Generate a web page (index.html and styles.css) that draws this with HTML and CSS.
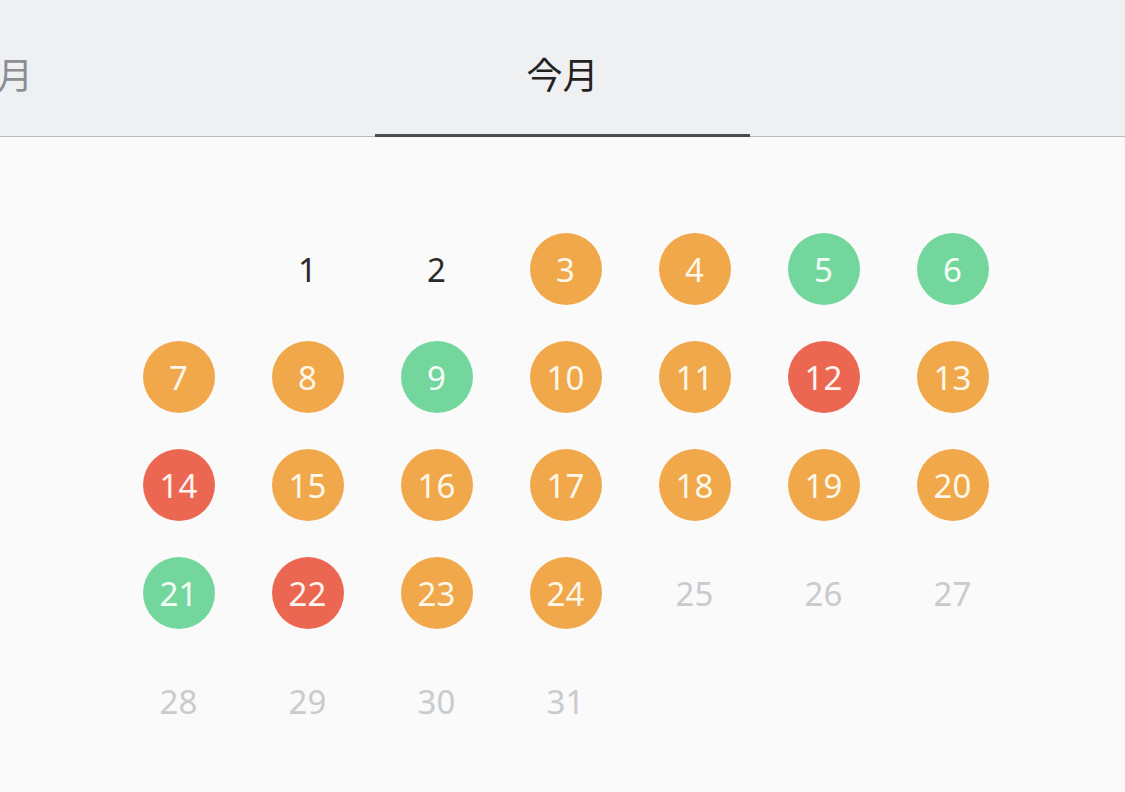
FILE: index.html
```html
<!DOCTYPE html>
<html lang="ja">
<head>
  <meta charset="UTF-8" />
  <title>カレンダー</title>
  <link rel="stylesheet" href="styles.css">
</head>
<body>

<div class="tabs">
  <div class="tab prev"><span class="tab-label">先月</span></div>
  <div class="tab active"><span class="tab-label">今月</span></div>
  <div class="tab"></div>
</div>

<div class="calendar">
  <div class="grid">
    <div class="day"></div>
    <div class="day"><span class="num">1</span></div>
    <div class="day"><span class="num">2</span></div>
    <div class="day"><span class="num orange">3</span></div>
    <div class="day"><span class="num orange">4</span></div>
    <div class="day"><span class="num green">5</span></div>
    <div class="day"><span class="num green">6</span></div>

    <div class="day"><span class="num orange">7</span></div>
    <div class="day"><span class="num orange">8</span></div>
    <div class="day"><span class="num green">9</span></div>
    <div class="day"><span class="num orange">10</span></div>
    <div class="day"><span class="num orange">11</span></div>
    <div class="day"><span class="num red">12</span></div>
    <div class="day"><span class="num orange">13</span></div>

    <div class="day"><span class="num red">14</span></div>
    <div class="day"><span class="num orange">15</span></div>
    <div class="day"><span class="num orange">16</span></div>
    <div class="day"><span class="num orange">17</span></div>
    <div class="day"><span class="num orange">18</span></div>
    <div class="day"><span class="num orange">19</span></div>
    <div class="day"><span class="num orange">20</span></div>

    <div class="day"><span class="num green">21</span></div>
    <div class="day"><span class="num red">22</span></div>
    <div class="day"><span class="num orange">23</span></div>
    <div class="day"><span class="num orange">24</span></div>
    <div class="day"><span class="num future">25</span></div>
    <div class="day"><span class="num future">26</span></div>
    <div class="day"><span class="num future">27</span></div>

    <div class="day"><span class="num future">28</span></div>
    <div class="day"><span class="num future">29</span></div>
    <div class="day"><span class="num future">30</span></div>
    <div class="day"><span class="num future">31</span></div>
  </div>
</div>

</body>
</html>
```

FILE: styles.css
```css
body {
  font-family: "Noto Sans", "Noto Sans CJK JP", sans-serif;
  background: #fafafa;
  margin: 0;
  padding: 0;
  overflow: hidden;
}

.tabs {
  display: flex;
  height: 136px;
  background: #eef0f2;
  border-bottom: 1px solid #b8babd;
}

.tab {
  width: 375px;
  flex: none;
  display: flex;
  align-items: center;
  justify-content: center;
  font-family: "Noto Sans CJK JP", sans-serif;
  font-size: 36px;
  color: #222;
  box-sizing: border-box;
  padding-top: 9px;
}

.tab.prev {
  justify-content: flex-start;
  color: #8b8e92;
}

.tab.prev .tab-label {
  margin-left: -39px;
}

.tab.active {
  border-bottom: 3px solid #4a4c4f;
  margin-bottom: -1px;
  padding-top: 12px;
}

.calendar {
  padding-top: 78px;
}

.grid {
  display: grid;
  grid-template-columns: repeat(7, 129px);
  grid-auto-rows: 108px;
  margin-left: 114px;
}

.day {
  display: flex;
  align-items: center;
  justify-content: center;
}

.num {
  width: 72px;
  height: 72px;
  border-radius: 50%;
  display: flex;
  align-items: center;
  justify-content: center;
  font-size: 33px;
  color: #2b2b2b;
}

.num.orange {
  background: #f0a84a;
  color: #fff8ea;
}

.num.green {
  background: #73d69c;
  color: #f4fff8;
}

.num.red {
  background: #ec6752;
  color: #fff4ef;
}

.num.future {
  color: #c7cbcf;
}
```
